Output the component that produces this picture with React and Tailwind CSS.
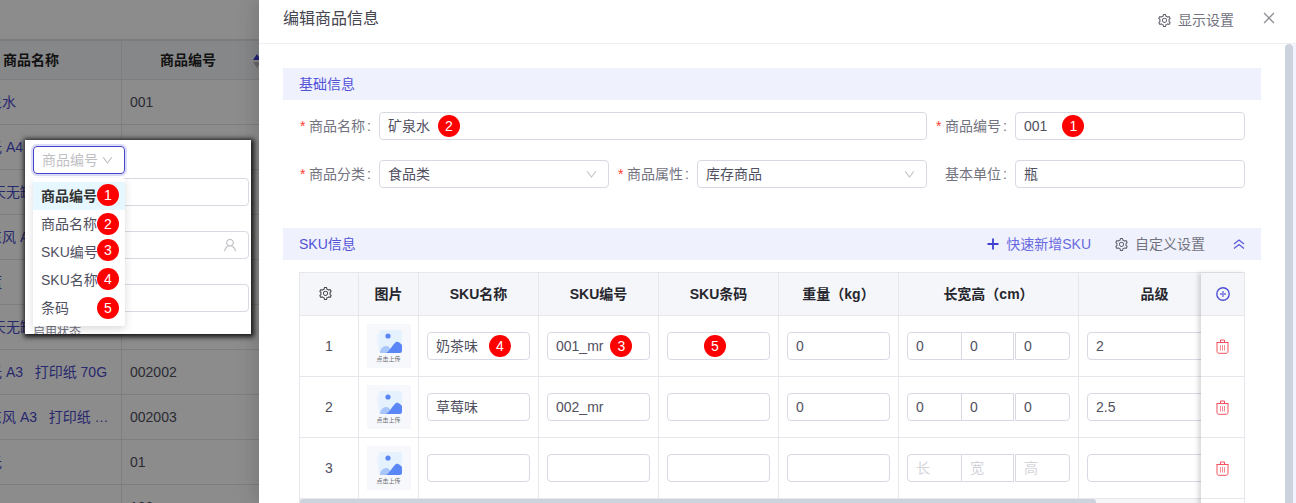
import React from 'react';
import { AiOutlineSetting, AiOutlineClose, AiOutlineDown, AiOutlineUser } from 'react-icons/ai';

const font = 'font-["Liberation_Sans","Noto_Sans_CJK_SC",sans-serif]';

function Badge({ n, className = '' }) {
  return (
    <span className={`inline-flex w-[22px] h-[22px] shrink-0 items-center justify-center rounded-full bg-[#ff0000] text-white text-[14px] font-normal ${className}`}>
      {n}
    </span>
  );
}

function Input({ value, className = '', children }) {
  return (
    <div className={`flex items-center h-[28px] border border-[#d9d9e3] rounded-[4px] pl-[8px] text-[14px] text-[#50505f] bg-white ${className}`}>
      {value}
      {children}
    </div>
  );
}

function Select({ value, className = '' }) {
  return (
    <Input value={value} className={`justify-between pr-[10px] ${className}`}>
      <AiOutlineDown className="text-[#c4c4c9] text-[13px]" />
    </Input>
  );
}

function Label({ text, required = true, className = '' }) {
  return (
    <div className={`flex items-center shrink-0 text-[14px] text-[#73737f] ${className}`}>
      <span className={`w-[10px] pl-px text-[#ff3b30] text-[14px] ${required ? '' : 'invisible'}`}>*</span>
      <span className="w-[56px]">{text}</span>
      <span className="w-[13px] pl-[2px]">:</span>
    </div>
  );
}

function SectionBar({ title, children, className = '' }) {
  return (
    <div className={`flex items-center justify-between h-[32px] w-[978px] pl-[16px] bg-[#eff1fd] text-[14px] text-[#5353d8] ${className}`}>
      <span>{title}</span>
      {children}
    </div>
  );
}

function Trash() {
  return (
    <svg width="13" height="15" viewBox="0 0 13 15" fill="none" stroke="#f5505f" strokeWidth="1">
      <path d="M.5 3.500h12" />
      <path d="M4.500 3.200V1h4v2.200" />
      <path d="M1 3.500v8.800c0 1.200.8 2 2 2h7c1.200 0 2-.8 2-2V3.500" />
      <path d="M4.500 6v5.500M6.500 6v5.500M8.500 6v5.500" stroke="#f98b95" />
    </svg>
  );
}

function PlusCircle() {
  return (
    <svg width="14" height="14" viewBox="0 0 14 14" fill="none">
      <circle cx="7" cy="7" r="6.200" stroke="#4f4fd6" strokeWidth="1.400" />
      <path d="M7 4v6M4 7h6" stroke="#8d8de6" strokeWidth="1.800" />
    </svg>
  );
}

function Upload() {
  return (
    <div className="flex flex-col items-center w-[44px] h-[44px] bg-[#f6f8fb] pt-[5px]">
      <svg width="30" height="26" viewBox="0 0 30 26">
        <path d="M2 6l6-2v20l-3-1z" fill="#eef4fe" />
        <rect x="5" y="1" width="23" height="23" rx="2" fill="#e6f1fe" />
        <circle cx="14" cy="7" r="2.600" fill="#5b86f5" />
        <path d="M6 24c0-4 3-7 6-7s4 2 6 5l1 2z" fill="#a9c6fb" />
        <path d="M12 24c3-1 7-9 10-11 2-1 4 1 6 3v6c0 1-1 2-2 2z" fill="#5b86f5" />
      </svg>
      <span className="text-[6px] leading-[8px] text-[#6b6b72] whitespace-nowrap">点击上传</span>
    </div>
  );
}

const cols = [
  { title: '图片', w: 'w-[60px]' },
  { title: 'SKU名称', w: 'w-[120px]' },
  { title: 'SKU编号', w: 'w-[120px]' },
  { title: 'SKU条码', w: 'w-[120px]' },
  { title: '重量（kg）', w: 'w-[120px]' },
  { title: '长宽高（cm）', w: 'w-[180px]' },
  { title: '品级', w: 'w-[152px]' },
];

const rows = [
  { no: 1, name: '奶茶味', code: '001_mr', weight: '0', dims: ['0', '0', '0'], grade: '2', badges: true },
  { no: 2, name: '草莓味', code: '002_mr', weight: '0', dims: ['0', '0', '0'], grade: '2.5' },
  { no: 3, name: '', code: '', weight: '', dims: [], grade: '' },
];

const cell = 'flex shrink-0 items-center h-[61px] border-r border-b border-[#e6e6ec]';

function SkuRow({ row }) {
  const empty = row.dims.length === 0;
  const dims = empty ? ['长', '宽', '高'] : row.dims;
  return (
    <div className="flex">
      <div className={`${cell} w-[59px] justify-center text-[14px] text-[#50505f]`}>{row.no}</div>
      <div className={`${cell} w-[60px] justify-center`}><Upload /></div>
      <div className={`${cell} w-[120px] pl-[8px]`}>
        <Input value={row.name} className="w-[103px]">
          {row.badges && <Badge n={4} className="ml-[11px]" />}
        </Input>
      </div>
      <div className={`${cell} w-[120px] pl-[8px]`}>
        <Input value={row.code} className="w-[103px]">
          {row.badges && <Badge n={3} className="ml-[7px]" />}
        </Input>
      </div>
      <div className={`${cell} w-[120px] pl-[8px]`}>
        <Input className="w-[103px]">
          {row.badges && <Badge n={5} className="ml-[28px]" />}
        </Input>
      </div>
      <div className={`${cell} w-[120px] pl-[8px]`}>
        <Input value={row.weight} className="w-[103px]" />
      </div>
      <div className={`${cell} w-[180px] pl-[8px]`}>
        <div className="flex">
          <Input value={dims[0]} className={`w-[55px] rounded-r-none ${empty ? 'text-[#d4d4da]' : ''}`} />
          <Input value={dims[1]} className={`w-[53px] -ml-px rounded-none ${empty ? 'text-[#d4d4da]' : ''}`} />
          <Input value={dims[2]} className={`w-[55px] ml-px rounded-l-none ${empty ? 'text-[#d4d4da]' : ''}`} />
        </div>
      </div>
      <div className={`${cell} w-[152px] pl-[8px]`}>
        <Input value={row.grade} className="w-[135px]" />
      </div>
    </div>
  );
}

const bgRows = [
  ['矿泉水', '001'],
  ['晨光 A4', ''],
  [' 晨天无缺纸', ''],
  ['晨东风 A4', ''],
  ['晨蓝', ''],
  [' 晨天无缺纸', ''],
  ['晨光 A3   打印纸 70G', '002002'],
  ['晨东风 A3   打印纸 …', '002003'],
  ['晨光', '01'],
  ['', '100'],
];

function Background() {
  return (
    <div className="w-[259px] shrink-0 overflow-hidden bg-white pt-[39px]">
      <div className="w-[300px] -ml-[40px] border-t-2 border-[#e2e2e6]">
        <div className="flex h-[39px] bg-[#f5f6f9] border-b border-[#e6e6ec] text-[14px] font-semibold text-[#222]">
          <div className="flex w-[162px] items-center justify-end pr-[62px] border-r border-[#e6e6ec]">商品名称</div>
          <div className="relative flex flex-1 items-center pl-[38px]">
            商品编号
            <svg className="absolute left-[131px] top-[12px]" width="8" height="16" viewBox="0 0 8 16">
              <path d="M4 1l4 6H0z" fill="#3f3fd0" />
              <path d="M4 15l4-6H0z" fill="#bbb" />
            </svg>
          </div>
        </div>
        {bgRows.map((r, i) => (
          <div key={i} className="flex h-[45px] border-b border-[#e6e6ec] text-[14px]">
            <div className="flex w-[162px] items-center overflow-hidden whitespace-pre pl-[14px] border-r border-[#e6e6ec] text-[#4a4ac8]">{r[0]}</div>
            <div className="flex flex-1 items-center pl-[8px] text-[#50505f]">{r[1]}</div>
          </div>
        ))}
      </div>
    </div>
  );
}

const options = [
  { label: '商品编号', badge: 'top-[2px]' },
  { label: '商品名称', badge: 'top-[3px]' },
  { label: 'SKU编号', badge: 'top-[1px]' },
  { label: 'SKU名称', badge: 'top-[2px]' },
  { label: '条码', badge: 'top-[3px]' },
];

function Popup() {
  return (
    <div className="absolute left-[25px] top-[140px] z-30 w-[226px] h-[194px] bg-white shadow-[1px_1px_5px_2px_rgba(0,0,0,0.85)]">
      <div className="absolute left-[8px] top-[6px] flex items-center justify-between w-[92px] h-[28px] pl-[8px] pr-[10px] border border-[#4545c9] rounded-[4px] ring-2 ring-[#dcdcf8] text-[14px] text-[#bfbfc4]">
        商品编号
        <AiOutlineDown className="text-[13px]" />
      </div>
      <div className="absolute left-[8px] right-[2px] top-[38px] h-[28px] border border-[#d9d9e3] rounded-[4px]" />
      <div className="absolute left-[8px] right-[2px] top-[91px] h-[28px] border border-[#d9d9e3] rounded-[4px] flex items-center justify-end pr-[10px]">
        <AiOutlineUser className="text-[#c4c4c9] text-[16px]" />
      </div>
      <div className="absolute left-[8px] right-[2px] top-[144px] h-[28px] border border-[#d9d9e3] rounded-[4px]" />
      <div className="absolute left-[8px] top-[185px] h-[9px] overflow-hidden text-[12px] leading-[14px] text-[#73737f]">启用状态</div>
      <div className="absolute left-[8px] top-[38px] w-[92px] h-[148px] py-[4px] bg-white rounded-[2px] shadow-[0_3px_8px_rgba(0,0,0,0.15)]">
        {options.map((o, i) => (
          <div key={o.label} className={`relative flex items-center h-[28px] pl-[8px] text-[14px] whitespace-nowrap ${i === 0 ? 'bg-[#e6f7ff] font-semibold text-[#333]' : 'text-[#50505f]'}`}>
            {o.label}
            <Badge n={i + 1} className={`absolute left-[64px] ${o.badge}`} />
          </div>
        ))}
      </div>
    </div>
  );
}

export default function App() {
  return (
    <div className={`relative flex w-[1296px] h-[503px] overflow-hidden bg-white ${font}`}>
      <Background />
      <div className="absolute left-0 top-0 w-[259px] h-[503px] z-10 bg-black/45" />
      <Popup />

      <div className="relative z-20 flex flex-col flex-1 min-w-0 bg-white shadow-[-6px_0_16px_rgba(0,0,0,0.12)]">
        {/* Header */}
        <div className="flex items-center justify-between h-[44px] shrink-0 pl-[24px] pr-[19px] border-b border-[#eeeef2]">
          <span className="text-[16px] text-[#45454f] mb-[5px]">编辑商品信息</span>
          <div className="flex items-center mb-[3px]">
            <AiOutlineSetting className="text-[15px] text-[#60606b] mr-[6px]" />
            <span className="text-[14px] text-[#73737f]">显示设置</span>
            <AiOutlineClose className="text-[16px] text-[#8e8e96] ml-[27px] mb-[4px]" />
          </div>
        </div>

        <div className="flex flex-1 min-h-0">
          <div className="flex-1 min-w-0 pl-[24px] pt-[24px]">
            <SectionBar title="基础信息" />

            <div className="flex items-center mt-[12px] pl-[16px] w-[962px]">
              <Label text="商品名称" className="w-[80px]" />
              <Input value="矿泉水" className="w-[548px]"><Badge n={2} className="ml-[8px]" /></Input>
              <Label text="商品编号" className="w-[88px] pl-[8px]" />
              <Input value="001" className="w-[230px]"><Badge n={1} className="ml-[15px]" /></Input>
            </div>
            <div className="flex items-center mt-[20px] pl-[16px] w-[962px]">
              <Label text="商品分类" className="w-[80px]" />
              <Select value="食品类" className="w-[230px]" />
              <Label text="商品属性" className="w-[88px] pl-[8px]" />
              <Select value="库存商品" className="w-[230px]" />
              <Label text="基本单位" required={false} className="w-[88px] pl-[8px]" />
              <Input value="瓶" className="w-[230px]" />
            </div>

            <SectionBar title="SKU信息" className="mt-[40px] pr-[16px]">
              <div className="flex items-center">
                <svg width="12" height="12" viewBox="0 0 12 12" className="mr-[7px]">
                  <path d="M6 .5v11M.5 6h11" stroke="#3f3fd0" strokeWidth="1.800" />
                </svg>
                <span className="text-[#6a6ae0]">快速新增SKU</span>
                <AiOutlineSetting className="text-[15px] text-[#60606b] ml-[23px] mr-[6px]" />
                <span className="text-[#73737f]">自定义设置</span>
                <svg width="12" height="12" viewBox="0 0 12 12" fill="none" stroke="#5a5ad8" strokeWidth="1.300" className="ml-[28px]">
                  <path d="M1 6l5-4 5 4M1 10.500l5-4 5 4" />
                </svg>
              </div>
            </SectionBar>

            {/* SKU table */}
            <div className="flex w-[946px] ml-[16px] mt-[12px] border-t border-l border-[#e6e6ec]">
              <div className="flex-1 min-w-0 overflow-hidden">
                <div className="flex">
                  <div className="flex shrink-0 items-center justify-center w-[59px] h-[43px] bg-[#f5f6f9] border-r border-b border-[#e6e6ec]">
                    <AiOutlineSetting className="text-[15px] text-[#45454f] mr-[8px] mb-[2px]" />
                  </div>
                  {cols.map((c) => (
                    <div key={c.title} className={`flex shrink-0 items-center justify-center ${c.w} h-[43px] bg-[#f5f6f9] border-r border-b border-[#e6e6ec] text-[14px] font-bold text-[#26262e]`}>
                      {c.title}
                    </div>
                  ))}
                </div>
                {rows.map((r) => <SkuRow key={r.no} row={r} />)}
                <div className="h-[6px] bg-[#f5f5f7]">
                  <div className="w-[796px] h-[6px] rounded-[3px] bg-[#cdd3dc]" />
                </div>
              </div>

              <div className="relative w-[44px] shrink-0 bg-white border-r border-[#e6e6ec] shadow-[-3px_0_4px_rgba(0,0,0,0.14)]">
                <div className="flex items-center justify-center h-[43px] bg-[#f5f6f9] border-b border-[#e6e6ec]">
                  <PlusCircle />
                </div>
                {rows.map((r) => (
                  <div key={r.no} className="flex items-center justify-center h-[61px] border-b border-[#e6e6ec]">
                    <Trash />
                  </div>
                ))}
              </div>
            </div>
          </div>

          {/* vertical scrollbar */}
          <div className="w-[8px] shrink-0 rounded-t-[4px] bg-[#cdd3dc]" />
          <div className="w-[3px] shrink-0 bg-[#f1f3fe]" />
        </div>
      </div>
    </div>
  );
}
